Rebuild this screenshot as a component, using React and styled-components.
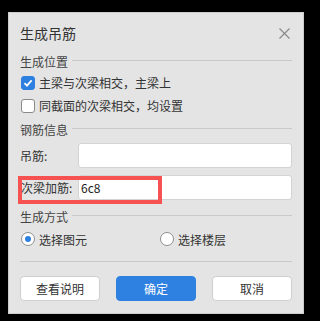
import React from 'react';
import styled, { createGlobalStyle } from 'styled-components';

const GlobalStyle = createGlobalStyle`
  html, body {
    margin: 0;
    padding: 0;
    background: #000;
  }
  body {
    width: 316px;
    height: 321px;
    overflow: hidden;
    font-family: "Noto Sans CJK SC", "Noto Sans", sans-serif;
    color: #333;
  }
`;

const Dialog = styled.div`
  box-sizing: border-box;
  margin: 12px 0 0 8px;
  width: 296px;
  height: 302px;
  background: #e4e4e4;
  border: 1px solid #cdcdcd;
  padding: 0 11px 0 11px;
  display: flex;
  flex-direction: column;
`;

const Header = styled.div`
  height: 39px;
  display: flex;
  align-items: center;
  justify-content: space-between;
`;

const Title = styled.div`
  font-size: 14px;
  margin-top: 1px;
  color: #333;
`;

const CloseButton = styled.div`
  width: 12px;
  height: 12px;
  margin-right: 2px;
  margin-top: 1px;
  display: flex;
  align-items: center;
  justify-content: center;
`;

const Section = styled.div`
  height: 18px;
  margin-top: ${p => p.$top || 0}px;
  display: flex;
  align-items: center;
  gap: 4px;
  font-size: 12px;
  color: #444;
  &::after {
    content: '';
    flex: 1;
    height: 1px;
    background: #c9c9c9;
    margin-top: -1px;
  }
`;

const CheckRow = styled.label`
  height: 23px;
  margin-top: ${p => p.$top || 0}px;
  display: flex;
  align-items: center;
  gap: 4px;
  font-size: 12px;
  padding-left: 1px;
`;

const Box = styled.span`
  box-sizing: border-box;
  width: 14px;
  height: 14px;
  border-radius: 3px;
  background: ${p => (p.$on ? '#2d7fe0' : '#fff')};
  border: 1px solid ${p => (p.$on ? '#2d7fe0' : '#8a8a8a')};
  display: flex;
  align-items: center;
  justify-content: center;
`;

const FieldRow = styled.div`
  position: relative;
  height: 25px;
  margin-top: ${p => p.$top || 0}px;
  display: flex;
  align-items: center;
`;

const FieldLabel = styled.div`
  width: 58px;
  font-size: 12px;
  padding-left: ${p => p.$indent || 0}px;
  box-sizing: border-box;
`;

const Input = styled.div`
  box-sizing: border-box;
  flex: 1;
  height: 25px;
  background: #fff;
  border: 1px solid #d3d3d3;
  border-radius: 3px;
  font-size: 12px;
  display: flex;
  align-items: center;
  padding-left: 2px;
  color: #222;
`;

const Highlight = styled.div`
  position: absolute;
  left: -2px;
  top: 1px;
  width: 144px;
  height: 28px;
  box-sizing: border-box;
  border: 4px solid #f65252;
  pointer-events: none;
`;

const RadioRow = styled.div`
  height: 20px;
  margin-top: 4px;
  display: flex;
  align-items: center;
  padding-left: 1px;
`;

const RadioItem = styled.label`
  width: ${p => p.$w || 'auto'};
  display: flex;
  align-items: center;
  gap: 4px;
  font-size: 12px;
`;

const Circle = styled.span`
  box-sizing: border-box;
  width: 14px;
  height: 14px;
  border-radius: 50%;
  background: #fff;
  border: 1px solid #8f8f8f;
  display: flex;
  align-items: center;
  justify-content: center;
  &::after {
    content: '';
    display: ${p => (p.$on ? 'block' : 'none')};
    width: 6px;
    height: 6px;
    border-radius: 50%;
    background: #2d7fe0;
  }
`;

const Divider = styled.div`
  height: 1px;
  background: #c9c9c9;
  margin-top: 12px;
`;

const Footer = styled.div`
  margin-top: 14px;
  display: flex;
  justify-content: space-between;
`;

const Button = styled.div`
  box-sizing: border-box;
  width: 80px;
  height: 25px;
  border-radius: 4px;
  font-size: 12px;
  display: flex;
  align-items: center;
  justify-content: center;
  background: ${p => (p.$primary ? '#2e80e1' : '#fff')};
  color: ${p => (p.$primary ? '#fff' : '#333')};
  border: 1px solid ${p => (p.$primary ? '#2e80e1' : '#cfcfcf')};
`;

export default function App() {
  return (
    <>
      <GlobalStyle />
      <Dialog>
        <Header>
          <Title>生成吊筋</Title>
          <CloseButton>
            <svg width="11" height="11" viewBox="0 0 11 11">
              <path d="M0.5 0.5 L10.5 10.5 M10.5 0.5 L0.5 10.5" stroke="#8a8a8a" strokeWidth="1.2" fill="none" />
            </svg>
          </CloseButton>
        </Header>

        <Section>生成位置</Section>
        <CheckRow $top={1}>
          <Box $on>
            <svg width="10" height="10" viewBox="0 0 10 10">
              <path d="M1.5 5.2 L4 7.6 L8.6 2.4" stroke="#fff" strokeWidth="1.8" fill="none" />
            </svg>
          </Box>
          主梁与次梁相交，主梁上
        </CheckRow>
        <CheckRow>
          <Box />
          同截面的次梁相交，均设置
        </CheckRow>

        <Section $top={3}>钢筋信息</Section>
        <FieldRow $top={5}>
          <FieldLabel>吊筋:</FieldLabel>
          <Input />
        </FieldRow>
        <FieldRow $top={7}>
          <FieldLabel $indent={1}>次梁加筋:</FieldLabel>
          <Input>6c8</Input>
          <Highlight />
        </FieldRow>

        <Section $top={7}>生成方式</Section>
        <RadioRow>
          <RadioItem $w="139px">
            <Circle $on />
            选择图元
          </RadioItem>
          <RadioItem>
            <Circle />
            选择楼层
          </RadioItem>
        </RadioRow>

        <Divider />
        <Footer>
          <Button>查看说明</Button>
          <Button $primary>确定</Button>
          <Button>取消</Button>
        </Footer>
      </Dialog>
    </>
  );
}
